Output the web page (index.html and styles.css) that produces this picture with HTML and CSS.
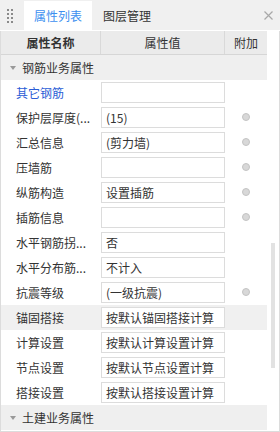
FILE: index.html
```html
<!DOCTYPE html>
<html lang="zh">

	<head>
		<meta charset="UTF-8">
		<title>属性列表</title>
		<link rel="stylesheet" href="styles.css">
	</head>

	<body>
		<div class="panel">
			<div class="tabbar">
				<div class="grip">
					<svg width="6" height="14" viewBox="0 0 6 14">
						<rect x="0" y="0" width="2" height="2" fill="#8a8a8a"/>
						<rect x="4" y="0" width="2" height="2" fill="#8a8a8a"/>
						<rect x="0" y="4" width="2" height="2" fill="#8a8a8a"/>
						<rect x="4" y="4" width="2" height="2" fill="#8a8a8a"/>
						<rect x="0" y="8" width="2" height="2" fill="#8a8a8a"/>
						<rect x="4" y="8" width="2" height="2" fill="#8a8a8a"/>
						<rect x="0" y="12" width="2" height="2" fill="#8a8a8a"/>
						<rect x="4" y="12" width="2" height="2" fill="#8a8a8a"/>
					</svg>
				</div>
				<div class="tab active">属性列表</div>
				<div class="tab">图层管理</div>
				<div class="close">
					<svg width="9" height="9" viewBox="0 0 9 9">
						<path d="M0.5 0.5 L8.5 8.5 M8.5 0.5 L0.5 8.5" stroke="#a8a8a8" stroke-width="1.2"/>
					</svg>
				</div>
			</div>

			<div class="content">
				<div class="table">
					<div class="head">
						<div class="hcell sorted">属性名称</div>
						<div class="hcell">属性值</div>
						<div class="hcell last">附加</div>
					</div>

					<div class="group"><span class="arrow"></span>钢筋业务属性</div>

					<div class="row">
						<div class="label link">其它钢筋</div>
						<div class="value"></div>
						<div class="extra"></div>
					</div>
					<div class="row">
						<div class="label">保护层厚度(...</div>
						<div class="value">(15)</div>
						<div class="extra"><span class="dot"></span></div>
					</div>
					<div class="row">
						<div class="label">汇总信息</div>
						<div class="value">(剪力墙)</div>
						<div class="extra"><span class="dot"></span></div>
					</div>
					<div class="row">
						<div class="label">压墙筋</div>
						<div class="value"></div>
						<div class="extra"><span class="dot"></span></div>
					</div>
					<div class="row">
						<div class="label">纵筋构造</div>
						<div class="value">设置插筋</div>
						<div class="extra"><span class="dot"></span></div>
					</div>
					<div class="row">
						<div class="label">插筋信息</div>
						<div class="value"></div>
						<div class="extra"><span class="dot"></span></div>
					</div>
					<div class="row">
						<div class="label">水平钢筋拐...</div>
						<div class="value">否</div>
						<div class="extra"></div>
					</div>
					<div class="row">
						<div class="label">水平分布筋...</div>
						<div class="value">不计入</div>
						<div class="extra"></div>
					</div>
					<div class="row">
						<div class="label">抗震等级</div>
						<div class="value">(一级抗震)</div>
						<div class="extra"><span class="dot"></span></div>
					</div>
					<div class="row selected">
						<div class="label">锚固搭接</div>
						<div class="value">按默认锚固搭接计算</div>
						<div class="extra"></div>
					</div>
					<div class="row">
						<div class="label">计算设置</div>
						<div class="value">按默认计算设置计算</div>
						<div class="extra"></div>
					</div>
					<div class="row">
						<div class="label">节点设置</div>
						<div class="value">按默认节点设置计算</div>
						<div class="extra"></div>
					</div>
					<div class="row">
						<div class="label">搭接设置</div>
						<div class="value">按默认搭接设置计算</div>
						<div class="extra"></div>
					</div>

					<div class="group"><span class="arrow"></span>土建业务属性</div>
				</div>

				<div class="scroll">
					<div class="thumb"></div>
				</div>
			</div>
		</div>
	</body>

</html>
```

FILE: styles.css
```css
body {
	margin: 0;
	font-family: "Noto Sans CJK SC", "Noto Sans", sans-serif;
	font-size: 12px;
	color: #333;
}

.panel {
	width: 280px;
	height: 432px;
	display: flex;
	flex-direction: column;
	background: #fff;
	overflow: hidden;
}

.tabbar {
	height: 30px;
	flex: 0 0 30px;
	display: flex;
	align-items: flex-end;
	background: #f0f0f0;
	box-sizing: border-box;
}

.grip {
	width: 24px;
	height: 30px;
	box-sizing: border-box;
	padding: 9px 0 0 7px;
}

.grip svg {
	display: block;
}

.tab {
	height: 29px;
	line-height: 29px;
	padding: 0 11px;
	font-size: 12px;
	color: #333;
	white-space: nowrap;
}

.tab.active {
	width: 68px;
	padding: 0;
	box-sizing: border-box;
	text-align: center;
	background: #fff;
	color: #3d8ff0;
}

.close {
	margin-left: auto;
	width: 26px;
	height: 30px;
	box-sizing: border-box;
	padding: 11px 0 0 10px;
}

.close svg {
	display: block;
}

.content {
	flex: 1;
	display: flex;
	border-left: 1px solid #dcdcdc;
	border-right: 1px solid #dcdcdc;
	border-bottom: 1px solid #dcdcdc;
	margin-top: 1px;
}

.table {
	width: 266px;
	flex: 0 0 266px;
}

.head {
	display: grid;
	grid-template-columns: 100px 124px 42px;
	height: 24px;
	background: #ebebeb;
	border-bottom: 1px solid #d6d6d6;
	box-sizing: border-box;
}

.hcell {
	line-height: 23px;
	text-align: center;
	border-right: 1px solid #d9d9d9;
}

.hcell.sorted {
	font-weight: bold;
}

.hcell.last {
	border-right: none;
}

.group {
	height: 25px;
	line-height: 25px;
	background: #efefef;
	padding-left: 9px;
	display: flex;
	align-items: center;
	color: #333;
}

.arrow {
	width: 0;
	height: 0;
	border-left: 3px solid transparent;
	border-right: 3px solid transparent;
	border-top: 4px solid #9a9a9a;
	margin-right: 6px;
}

.row {
	display: grid;
	grid-template-columns: 100px 124px 42px;
	height: 25px;
}

.row.selected {
	background: #f0f0f0;
}

.label {
	padding-left: 15px;
	line-height: 25px;
	white-space: nowrap;
	overflow: hidden;
}

.label.link {
	color: #2b5dd6;
}

.value {
	margin-top: 2px;
	height: 21px;
	line-height: 19px;
	box-sizing: border-box;
	border: 1px solid #dcdcdc;
	background: #fff;
	padding-left: 4px;
	white-space: nowrap;
	overflow: hidden;
}

.extra {
	display: flex;
	align-items: center;
	justify-content: center;
}

.dot {
	width: 8px;
	height: 8px;
	border-radius: 50%;
	background: #d8d8d8;
	border: 1px solid #c4c4c4;
	box-sizing: border-box;
	margin-left: -1px;
	margin-top: -1px;
}

.scroll {
	flex: 1;
	padding: 212px 0 0 4px;
}

.thumb {
	width: 4px;
	height: 125px;
	background: #e2e2e2;
}
```
